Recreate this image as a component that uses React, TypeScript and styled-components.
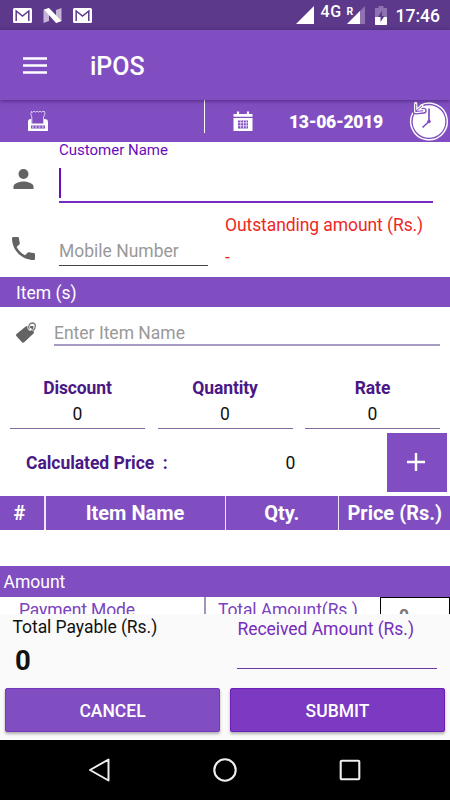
import React from 'react';
import styled, { createGlobalStyle } from 'styled-components';

const GlobalStyle = createGlobalStyle`
  * { box-sizing: border-box; }
  body { margin: 0; background: #fff; font-family: Roboto, "Liberation Sans", sans-serif; }
`;

const purple = '#804ec1';
const deep = '#6a0dbb';

const Screen = styled.div`
  width: 450px;
  height: 800px;
  display: flex;
  flex-direction: column;
  overflow: hidden;
  background: #fff;
  font-size: 17.5px;
  line-height: 20px;
  white-space: pre;
  svg { display: block; flex: none; }
`;

const StatusBar = styled.header`
  height: 30px;
  flex: none;
  display: flex;
  align-items: center;
  padding: 0 10px 0 13px;
  background: #5c398b;
  color: #fff;
`;
const Notifications = styled.div`
  display: flex;
  gap: 11px;
  margin-right: auto;
`;
const Network = styled.span`
  margin: -7px 0 0 7px;
  font-size: 16px;
  font-weight: 500;
  letter-spacing: 0.5px;
`;
const Roaming = styled.span`
  margin: -7px 0 0 5px;
  width: 7px;
  font-size: 10.5px;
  font-weight: 700;
`;
const WeakBox = styled.div`
  margin: 0 10px 0 -7px;
`;
const Clock = styled.span`
  margin: 2px 0 0 9px;
  font-size: 17.5px;
  font-weight: 500;
`;

const AppBar = styled.div`
  height: 70px;
  flex: none;
  display: flex;
  align-items: center;
  gap: 43px;
  padding: 0 23px;
  background: ${purple};
  color: #fff;
  position: relative;
  box-shadow: 0 1px 4px rgba(30, 0, 60, 0.5);
`;
const Title = styled.h1`
  margin: 4px 0 0;
  font-size: 25px;
  font-weight: 500;
  line-height: 30px;
`;

const InfoBar = styled.div`
  height: 41.5px;
  flex: none;
  display: grid;
  grid-template-columns: 203.5px 1.5px 1fr;
  background: ${purple};
  color: #fff;
`;
const PrinterCell = styled.div`
  padding: 10px 0 0 27px;
`;
const Divider = styled.i`
  height: 33px;
  background: #fff;
`;
const DateCell = styled.div`
  display: flex;
  align-items: center;
  padding-left: 28px;
  font-weight: 700;
  letter-spacing: -0.3px;
  b { margin: 2px 0 0 36px; width: 120px; }
`;

const Customer = styled.section`
  height: 135px;
  flex: none;
  display: grid;
  grid-template-columns: 59px 1fr;
  grid-template-rows: 61.5px 1fr;
`;
const IconCell = styled.div<{ $x: number; $y: number }>`
  padding: ${p => p.$y}px 0 0 ${p => p.$x}px;
`;
const NameField = styled.label`
  width: 373.5px;
  height: 61.5px;
  font-size: 15px;
  line-height: 17px;
  color: ${deep};
  border-bottom: 2px solid #752ac2;
`;
const Caret = styled.i`
  display: block;
  width: 2px;
  height: 30px;
  margin-top: 9.5px;
  background: ${deep};
`;
const PhoneRow = styled.div`
  display: grid;
  grid-template-columns: 148.5px 1fr;
  column-gap: 17.5px;
`;
const PhoneField = styled.div`
  height: 62.5px;
  padding-top: 38px;
  color: #999;
  border-bottom: 1px solid #444;
`;
const Outstanding = styled.div`
  padding-top: 12px;
  letter-spacing: -0.08px;
  color: #ee2725;
  div + div { margin-top: 12px; }
`;

const SectionBar = styled.h2<{ $inset: number; $height: number }>`
  height: ${p => p.$height}px;
  flex: none;
  margin: 0;
  padding: 0 0 0 ${p => p.$inset}px;
  font-size: 17.5px;
  font-weight: 400;
  line-height: ${p => p.$height + 2}px;
  color: #fff;
  background: ${purple};
`;

const ItemEntry = styled.div`
  height: 53px;
  flex: none;
  display: flex;
  padding-left: 15px;
`;
const ItemField = styled.div`
  width: 386px;
  height: 39px;
  margin-left: 17px;
  padding-top: 16px;
  color: #999;
  border-bottom: 2px solid #a99cc2;
`;

const Figures = styled.div`
  height: 72px;
  flex: none;
  display: grid;
  grid-template-columns: repeat(3, 135px);
  column-gap: 12.5px;
  padding: 18px 10px 0;
  text-align: center;
`;
const Figure = styled.div`
  height: 51px;
  border-bottom: 1px solid #806a9e;
  b { display: block; font-weight: 700; letter-spacing: -0.1px; color: #4a1886; }
  span { display: block; margin-top: 6px; color: #111; }
`;

const PriceRow = styled.div`
  height: 64px;
  flex: none;
  display: grid;
  grid-template-columns: 259.5px 101px 60px;
  padding-left: 26px;
  line-height: 63px;
  b { font-weight: 700; letter-spacing: -0.04px; color: #4a1886; }
  span { color: #111; }
`;
const AddButton = styled.button`
  width: 60px;
  height: 59.5px;
  margin: 0.5px 0 0;
  padding: 20px;
  border: 0;
  background: ${purple};
`;

const TableHead = styled.div`
  height: 33px;
  flex: none;
  margin-bottom: 37px;
  display: grid;
  grid-template-columns: 44px 179px 111.5px 111.5px;
  column-gap: 1.5px;
  background: #eee5f8;
  font-size: 20px;
  font-weight: 700;
  line-height: 34px;
  text-align: center;
  color: #fff;
  span { background: ${purple}; }
  span:first-child { padding-right: 5px; }
`;

const PaymentRow = styled.div`
  height: 17px;
  flex: none;
  display: grid;
  grid-template-columns: 204px 1.5px 174.5px 70px;
  overflow: hidden;
  color: #7a43c0;
  line-height: 27px;
`;
const Label = styled.span<{ $inset: number }>`
  padding-left: ${p => p.$inset}px;
  letter-spacing: -0.12px;
`;
const Rule = styled.i`
  background: #a294bd;
`;
const Total = styled.span`
  height: 40px;
  border: 1px solid #000;
  padding: 5px 0 0 18px;
  color: #777;
  font-weight: 700;
`;

const Footer = styled.footer`
  height: 126px;
  flex: none;
  display: grid;
  grid-template-columns: 215px 215px;
  grid-template-rows: 73.5px 44.5px;
  column-gap: 10px;
  padding-left: 5px;
  background: #fafafa;
`;
const Payable = styled.div`
  padding: 3px 0 0 7.5px;
  letter-spacing: -0.05px;
  color: #111;
  b { display: block; margin: 9px 0 0 2.5px; font-size: 27.5px; line-height: 30px; }
`;
const Received = styled.div`
  width: 200px;
  height: 55px;
  margin-left: 7.4px;
  padding-top: 5px;
  letter-spacing: -0.03px;
  color: #752cbd;
  border-bottom: 1px solid #673a9f;
`;
const Action = styled.button<{ $primary?: boolean }>`
  height: 44.5px;
  padding: 2px 0 0;
  border: 1px solid ${p => (p.$primary ? '#6c1fb8' : '#7639bd')};
  border-radius: 2px;
  background: ${p => (p.$primary ? '#7c39c2' : purple)};
  box-shadow: 0 2px 3px rgba(0, 0, 0, 0.3);
  color: #fff;
  font: 500 17.5px Roboto, sans-serif;
`;

const NavBar = styled.nav`
  height: 60px;
  flex: none;
  display: grid;
  grid-template-columns: repeat(3, 24px);
  column-gap: 101px;
  justify-content: center;
  align-items: center;
  background: #000;
`;

const MailIcon = () => (
  <svg width="19" height="15" viewBox="0 0 19 15">
    <rect width="19" height="15" rx="1.5" fill="#fff" />
    <path d="M3.2 13V3l6.3 5 6.3-5v10" fill="none" stroke="#5c398b" strokeWidth="1.5" />
  </svg>
);
const NougatIcon = () => (
  <svg width="19" height="15" viewBox="0 0 19 15">
    <path d="M.5 2 6 0v13L.5 15ZM13 2l5.5-2v13L13 15Z" fill="#c4b4d8" />
    <path d="M1 1.5 6 0l12.5 13-5.5 2Z" fill="#fff" />
  </svg>
);
const Signal = () => (
  <svg width="18" height="18" viewBox="0 0 18 18"><path d="M18 0v18H0Z" fill="#fff" /></svg>
);
const WeakSignal = () => (
  <svg width="18" height="18" viewBox="0 0 18 18">
    <path d="M18 0v18H0Z" fill="#8e73b0" />
    <path d="M13 5v13H0Z" fill="#fff" />
  </svg>
);
const Battery = () => (
  <svg width="12" height="19" viewBox="0 0 12 19">
    <path d="M3.5 0h5v2H12v9H0V2h3.5Z" fill="#8e73b0" />
    <path d="M0 11h12v7.2q0 .8-.8.8H.8Q0 19 0 18.2Z" fill="#fff" />
    <path d="M7.2 4.5 3 11h2.5v5l4-6H7Z" fill="#5c398b" />
  </svg>
);
const MenuIcon = () => (
  <svg width="24" height="17" viewBox="0 0 24 17">
    <path d="M0 1.5h24M0 8.5h24M0 15.5h24" stroke="#fff" strokeWidth="2.6" />
  </svg>
);
const Printer = () => (
  <svg width="22" height="22" viewBox="0 0 22 22">
    <path d="M1 12q0-3 2.5-3h1v4.5h12V9h1Q21 9 21 12v9H1Z" fill="#fff" />
    <path d="M4.8 13V7Q3 4 4.5 1.2M16.500 13V7Q19 4 17.5 1.2" fill="none" stroke="#d9c9ee" strokeWidth="1" />
    <path d="m4 1.500 1.500.8L7 1.200l1.500 1L10 1.200l1.500 1L13 1.200l1.500 1L16 1.200l1.500.8" fill="none" stroke="#d9c9ee" strokeWidth="1" />
    <path d="M4 15.500h14v3H4Z" fill="#804ec1" />
    <path d="M5 17h12" stroke="#fff" strokeWidth="1.2" strokeDasharray="1.8 1.5" />
  </svg>
);
const Calendar = () => (
  <svg width="20" height="21" viewBox="0 0 20 21">
    <path d="M.5 3h19v2.700H.5ZM.5 7h19v13H.5Z" fill="#fff" />
    <path d="M5 .5v4M15 .5v4" stroke="#fff" strokeWidth="2.2" />
    <path d="M5 9.500h10v8H5Z" fill="#804ec1" />
    <path d="M5 11.800h10M5 14.800h10M7.700 9.500v8M10.500 9.500v8M13.200 9.500v8" stroke="#fff" strokeWidth=".7" />
  </svg>
);
const History = () => (
  <svg width="40" height="42" viewBox="0 0 40 42">
    <circle cx="20" cy="21.5" r="16.3" fill="#fff" />
    <path d="M11 5.500A18.300 18.300 0 1 1 4 12.500" fill="none" stroke="#fff" strokeWidth="1.4" />
    <path d="M6.700 3.500v8l8-.8" fill="none" stroke="#804ec1" strokeWidth="6" strokeLinejoin="round" strokeLinecap="round" />
    <path d="M6.700 3.500v8l8-.8M7 11l6-5" fill="none" stroke="#fff" strokeWidth="3.3" strokeLinejoin="round" strokeLinecap="round" />
    <path d="M6.700 4v7.500l7.500-.8M7 11l6-5" fill="none" stroke="#804ec1" strokeWidth="1" />
    <path d="M20 8.500v13l-6.500 6" fill="none" stroke="#804ec1" strokeWidth="1.7" />
    <circle cx="20" cy="21.5" r="1.8" fill="#804ec1" />
  </svg>
);
const Person = () => (
  <svg width="21" height="20" viewBox="0 0 21 20" fill="#636363">
    <circle cx="10.5" cy="5" r="5" /><path d="M.5 20v-2.500c0-3.300 6.700-5 10-5s10 1.700 10 5V20Z" />
  </svg>
);
const Phone = () => (
  <svg width="23" height="23" viewBox="3 3 18 18" fill="#636363">
    <path d="M6.620 10.790c1.440 2.830 3.760 5.140 6.590 6.590l2.200-2.200c.27-.27.67-.36 1.020-.24 1.120.37 2.330.57 3.570.57.55 0 1 .45 1 1V20c0 .55-.45 1-1 1-9.390 0-17-7.610-17-17 0-.55.45-1 1-1h3.500c.55 0 1 .45 1 1 0 1.250.2 2.450.57 3.570.11.35.03.74-.25 1.020Z" />
  </svg>
);
const Tag = () => (
  <svg width="22" height="22" viewBox="0 0 22 22">
    <path d="M1.500 12 11 4.200 18.300 4 19 11 9.200 20.300Q8 21.300 7 20.200L1.300 14Q.5 13 1.500 12Z" fill="#636363" />
    <circle cx="15.2" cy="7.2" r="1.5" fill="#fff" />
    <path d="M14.300 7.500C12.500 4 14.500 1 17.500 1c3.500.2 4 4.500.3 8" fill="none" stroke="#fff" strokeWidth="2.4" />
    <path d="M14.300 7.500C12.500 4 14.500 1 17.500 1c3.500.2 4 4.500.3 8" fill="none" stroke="#7d7d7d" strokeWidth="1.3" />
  </svg>
);
const Plus = () => (
  <svg width="18" height="18" viewBox="0 0 18 18"><path d="M9 0v18M0 9h18" stroke="#fff" strokeWidth="2.4" /></svg>
);
const Back = () => (
  <svg width="24" height="24" viewBox="0 0 24 24"><path d="M20.500 1.500v21L2 12Z" fill="none" stroke="#eee" strokeWidth="2" strokeLinejoin="round" /></svg>
);
const Home = () => (
  <svg width="24" height="24" viewBox="0 0 24 24"><circle cx="12" cy="12" r="10.7" fill="none" stroke="#eee" strokeWidth="2.1" /></svg>
);
const Recent = () => (
  <svg width="24" height="24" viewBox="0 0 24 24"><rect x="2.7" y="2.7" width="18.6" height="18.6" rx="1" fill="none" stroke="#eee" strokeWidth="2.1" /></svg>
);

export default function App() {
  return (
    <>
      <GlobalStyle />
      <Screen>
        <StatusBar>
          <Notifications><MailIcon /><NougatIcon /><MailIcon /></Notifications>
          <Signal />
          <Network>4G</Network>
          <Roaming>R</Roaming>
          <WeakBox><WeakSignal /></WeakBox>
          <Battery />
          <Clock>17:46</Clock>
        </StatusBar>
        <AppBar><MenuIcon /><Title>iPOS</Title></AppBar>
        <InfoBar>
          <PrinterCell><Printer /></PrinterCell>
          <Divider />
          <DateCell><Calendar /><b>13-06-2019</b><History /></DateCell>
        </InfoBar>
        <Customer>
          <IconCell $x={13} $y={27}><Person /></IconCell>
          <NameField>Customer Name<Caret /></NameField>
          <IconCell $x={12} $y={34}><Phone /></IconCell>
          <PhoneRow>
            <PhoneField>Mobile Number</PhoneField>
            <Outstanding><div>Outstanding amount (Rs.)</div><div>-</div></Outstanding>
          </PhoneRow>
        </Customer>
        <SectionBar $inset={16} $height={30.5}>Item (s)</SectionBar>
        <ItemEntry>
          <IconCell $x={0} $y={15}><Tag /></IconCell>
          <ItemField>Enter Item Name</ItemField>
        </ItemEntry>
        <Figures>
          {['Discount', 'Quantity', 'Rate'].map(name => (
            <Figure key={name}><b>{name}</b><span>0</span></Figure>
          ))}
        </Figures>
        <PriceRow>
          <b>Calculated Price  :</b>
          <span>0</span>
          <AddButton aria-label="Add"><Plus /></AddButton>
        </PriceRow>
        <TableHead><span>#</span><span>Item Name</span><span>Qty.</span><span>Price (Rs.)</span></TableHead>
        <SectionBar $inset={3.5} $height={31}>Amount</SectionBar>
        <PaymentRow>
          <Label $inset={19}>Payment Mode</Label>
          <Rule />
          <Label $inset={12.5}>Total Amount(Rs.)</Label>
          <Total>0</Total>
        </PaymentRow>
        <Footer>
          <Payable>Total Payable (Rs.)<b>0</b></Payable>
          <Received>Received Amount (Rs.)</Received>
          <Action>CANCEL</Action>
          <Action $primary>SUBMIT</Action>
        </Footer>
        <NavBar><Back /><Home /><Recent /></NavBar>
      </Screen>
    </>
  );
}
